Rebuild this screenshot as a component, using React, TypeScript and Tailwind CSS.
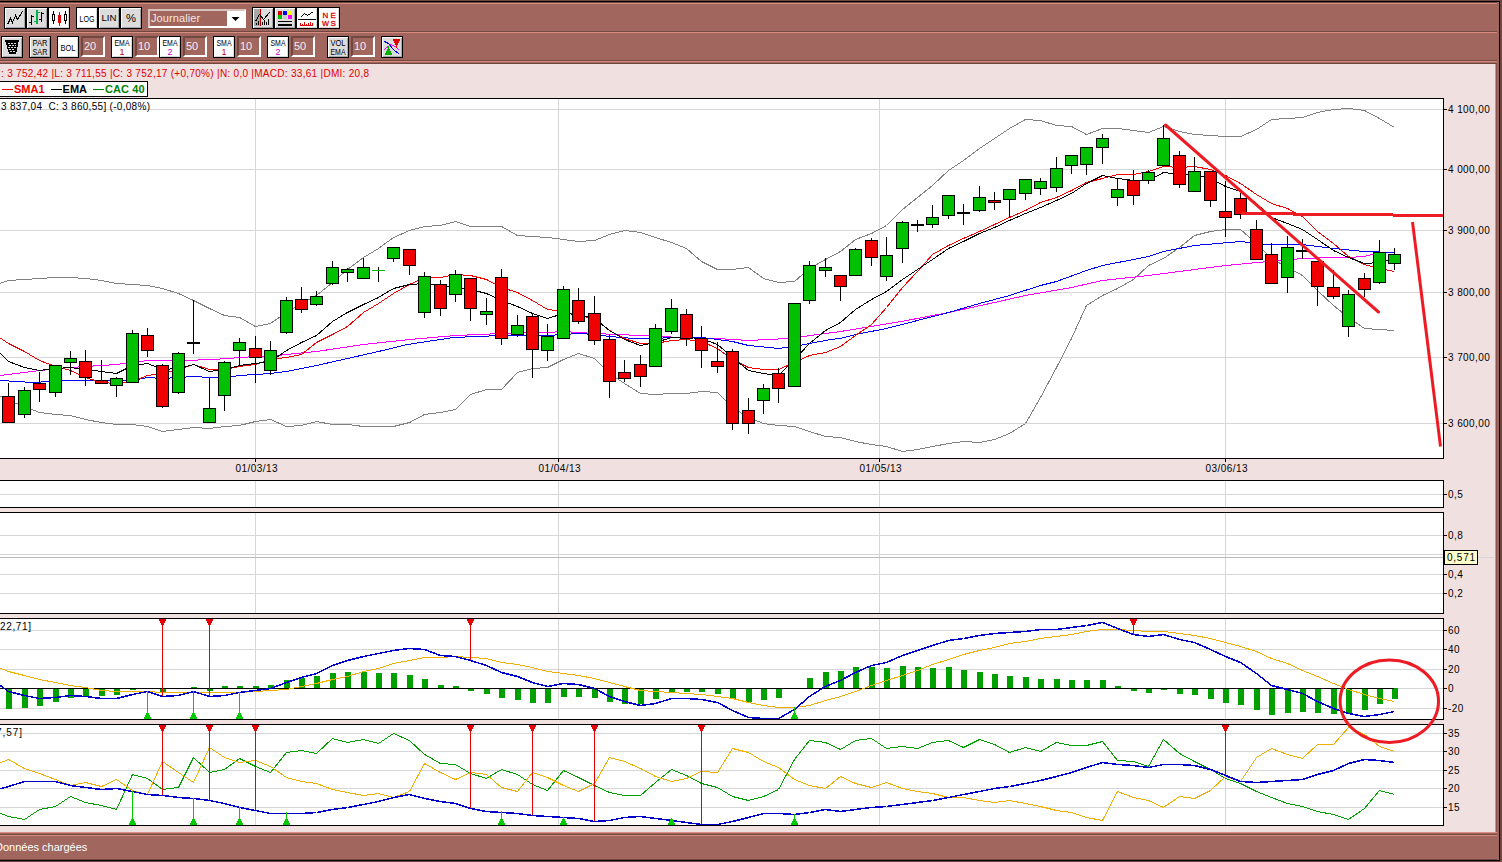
import React from "react";

const FONT = "'Liberation Sans', Arial, sans-serif";
const px = (i: number) => Math.round(8.3 + 15.4 * i);

type Candle = [string, number, number, number, number];

// [kind, high, bodyTop, bodyBottom, low]
const candles: Candle[] = [
  ["R", 383, 396, 422, 422], ["G", 387, 390, 414, 417], ["R", 372, 383, 389, 401], ["G", 365, 365, 392, 396],
  ["G", 351, 358, 362, 374], ["R", 350, 361, 377, 385], ["R", 360, 380, 383, 383], ["G", 377, 378, 385, 396],
  ["G", 330, 333, 382, 382], ["R", 328, 335, 350, 356], ["R", 364, 365, 406, 407], ["G", 352, 353, 392, 393],
  ["D", 300, 343, 343, 353], ["G", 378, 408, 422, 422], ["G", 361, 362, 395, 410], ["G", 338, 342, 350, 364],
  ["R", 336, 348, 357, 382], ["G", 341, 350, 370, 374], ["G", 297, 300, 332, 333], ["R", 287, 299, 309, 312],
  ["G", 291, 296, 304, 305], ["G", 261, 267, 283, 284], ["G", 268, 269, 272, 281], ["G", 258, 267, 278, 278],
  ["L", 267, 270, 270, 281], ["G", 247, 247, 258, 261], ["R", 249, 249, 265, 274], ["G", 272, 276, 312, 317],
  ["R", 280, 284, 308, 315], ["G", 270, 274, 294, 301], ["R", 278, 278, 308, 320], ["G", 298, 311, 314, 324],
  ["R", 269, 277, 338, 344], ["G", 315, 325, 334, 336], ["R", 314, 316, 349, 377], ["G", 324, 336, 350, 360],
  ["G", 286, 289, 338, 338], ["R", 288, 300, 321, 323], ["R", 296, 313, 340, 344], ["R", 334, 339, 381, 397],
  ["R", 360, 372, 378, 381], ["R", 355, 364, 376, 386], ["G", 324, 328, 366, 366], ["G", 299, 308, 331, 333],
  ["R", 309, 314, 338, 345], ["R", 326, 338, 350, 367], ["R", 342, 361, 366, 372], ["R", 349, 351, 423, 429],
  ["R", 398, 410, 423, 433], ["G", 384, 388, 400, 413], ["R", 368, 373, 388, 402], ["G", 303, 303, 386, 386],
  ["G", 261, 265, 300, 303], ["G", 258, 267, 270, 276], ["R", 275, 275, 286, 300], ["G", 248, 249, 275, 275],
  ["R", 238, 240, 257, 265], ["G", 237, 255, 276, 280], ["G", 221, 222, 248, 262], ["D", 220, 225, 225, 231],
  ["G", 205, 217, 224, 227], ["G", 195, 195, 215, 218], ["D", 204, 213, 213, 224], ["G", 186, 197, 210, 211],
  ["R", 192, 200, 202, 209], ["G", 189, 189, 199, 217], ["G", 179, 179, 193, 199], ["G", 178, 181, 188, 194],
  ["G", 157, 168, 187, 191], ["G", 155, 155, 165, 173], ["G", 147, 147, 164, 174], ["G", 134, 138, 147, 163],
  ["G", 179, 189, 197, 205], ["R", 170, 180, 195, 204], ["G", 170, 172, 180, 183], ["G", 125, 138, 165, 166],
  ["R", 151, 155, 184, 187], ["G", 157, 171, 191, 191], ["R", 171, 171, 200, 206], ["R", 181, 211, 217, 236],
  ["R", 193, 198, 214, 218], ["R", 220, 229, 259, 259], ["R", 243, 254, 283, 283], ["G", 236, 247, 277, 292],
  ["D", 239, 251, 251, 258], ["R", 261, 261, 286, 305], ["R", 270, 287, 296, 298], ["G", 290, 294, 326, 336],
  ["R", 273, 278, 289, 296], ["G", 240, 252, 282, 283], ["G", 248, 254, 263, 269],
];

// Every series starts one session before the first visible candle.
const upperBand = [285, 280, 279, 278, 277, 277, 278, 280, 283, 284, 285, 288, 293, 300, 308, 315, 317, 326, 323, 312, 303, 295, 282, 269, 257, 248, 237, 230, 226, 225, 221, 226, 226, 226, 235, 236, 237, 239, 241, 240, 234, 230, 232, 237, 242, 248, 261, 269, 269, 267, 278, 282, 281, 268, 259, 251, 239, 233, 225, 209, 197, 185, 170, 160, 148, 138, 128, 119, 120, 125, 126, 134, 128, 128, 130, 132, 126, 131, 134, 135, 136, 136, 129, 119, 118, 117, 112, 109, 108, 110, 118, 127];
const lowerBand = [392, 400, 406, 412, 414, 415, 419, 422, 424, 424, 426, 431, 429, 427, 428, 426, 425, 421, 419, 426, 425, 421, 424, 424, 426, 426, 426, 422, 414, 412, 409, 394, 389, 389, 372, 368, 367, 359, 353, 358, 373, 383, 393, 394, 393, 393, 391, 392, 407, 417, 423, 425, 426, 431, 436, 437, 441, 444, 446, 451, 449, 446, 443, 441, 442, 439, 433, 423, 397, 367, 338, 305, 295, 288, 279, 265, 258, 247, 235, 231, 229, 229, 243, 258, 267, 275, 290, 305, 317, 328, 329, 330];
const sma1 = [333, 343, 351, 360, 366, 370, 377, 382, 383, 381, 375, 373, 369, 364, 369, 369, 366, 364, 359, 357, 354, 342, 334, 326, 312, 303, 293, 284, 277, 277, 274, 275, 279, 287, 292, 300, 309, 311, 315, 318, 330, 338, 343, 343, 340, 339, 341, 348, 359, 367, 369, 369, 362, 355, 352, 346, 335, 324, 307, 287, 271, 254, 245, 238, 231, 224, 217, 210, 202, 197, 190, 182, 178, 174, 174, 171, 166, 167, 166, 169, 175, 183, 194, 203, 208, 216, 231, 243, 256, 264, 268, 271];
const ema1 = [346, 361, 367, 370, 368, 367, 369, 371, 373, 365, 363, 369, 368, 364, 371, 369, 365, 363, 361, 350, 342, 335, 321, 312, 304, 297, 288, 284, 283, 285, 287, 289, 293, 300, 306, 313, 318, 313, 314, 318, 330, 339, 345, 342, 337, 337, 338, 344, 357, 370, 373, 375, 359, 343, 330, 322, 309, 299, 291, 279, 269, 259, 248, 241, 233, 227, 220, 213, 207, 200, 193, 183, 175, 178, 180, 180, 172, 174, 174, 178, 186, 191, 203, 217, 223, 229, 239, 250, 257, 263, 262, 258];
const ema2: number[][] = [[0, 380], [33, 382], [63, 380], [116, 380], [132, 380], [147, 377], [162, 378], [193, 376], [209, 377], [224, 377], [239, 375], [255, 374], [270, 373], [286, 371], [316, 365], [347, 358], [378, 351], [407, 344], [453, 337], [501, 335], [530, 335], [547, 335], [563, 334], [578, 333], [594, 334], [609, 336], [633, 338], [655, 338], [671, 337], [701, 337], [717, 339], [732, 341], [748, 345], [778, 348], [794, 346], [809, 343], [830, 339], [840, 338], [855, 334], [886, 328], [917, 320], [948, 312], [979, 303], [1009, 295], [1040, 285], [1056, 281], [1086, 270], [1102, 265], [1133, 259], [1148, 256], [1163, 251], [1194, 245], [1240, 241], [1267, 244], [1302, 244], [1333, 248], [1364, 251], [1394, 252]];
const sma2: number[][] = [[0, 375], [39, 370], [70, 367], [116, 364], [147, 360], [183, 360], [213, 359], [255, 356], [270, 356], [286, 354], [316, 351], [363, 344], [409, 339], [455, 335], [501, 333], [547, 332], [563, 331], [594, 333], [640, 335], [680, 337], [717, 338], [748, 340], [788, 338], [840, 331], [901, 321], [948, 312], [994, 302], [1025, 295], [1071, 287], [1102, 280], [1148, 275], [1225, 265], [1268, 261], [1302, 258], [1333, 257], [1348, 257], [1364, 256], [1379, 252], [1394, 252]];

const macdBars = [709, 708, 706, 702, 698, 697, 696, 695, 690, 0, 692, 0, 687, 691, 686, 686, 686, 685, 680, 678, 676, 673, 672, 672, 673, 673, 675, 679, 685, 686, 691, 694, 698, 700, 703, 703, 697, 697, 698, 702, 704, 704, 699, 692, 692, 692, 694, 699, 702, 700, 698, 0, 678, 672, 671, 667, 667, 668, 666, 667, 668, 667, 670, 672, 674, 676, 677, 679, 679, 680, 680, 680, 686, 691, 693, 690, 694, 695, 699, 703, 705, 710, 715, 713, 712, 713, 714, 713, 710, 704, 699];
const macd = [680, 691, 695, 698, 697, 695, 696, 698, 698, 694, 691, 696, 695, 691, 696, 695, 692, 690, 688, 682, 677, 673, 665, 660, 656, 653, 650, 648, 649, 655, 656, 660, 665, 672, 676, 682, 686, 683, 684, 688, 696, 701, 705, 703, 698, 698, 699, 702, 710, 717, 718, 718, 709, 696, 686, 680, 672, 665, 662, 655, 650, 645, 640, 638, 635, 633, 632, 631, 629, 629, 627, 625, 622, 628, 634, 636, 634, 639, 642, 649, 656, 662, 673, 685, 689, 693, 701, 708, 713, 716, 714, 711];
const macdSignal = [665, 671, 675, 679, 682, 685, 687, 690, 691, 691, 691, 692, 692, 692, 692, 692, 692, 691, 690, 689, 686, 683, 679, 676, 671, 668, 663, 660, 657, 657, 656, 657, 658, 662, 664, 667, 671, 673, 675, 678, 682, 686, 690, 691, 692, 693, 694, 696, 698, 702, 705, 707, 707, 705, 700, 696, 691, 685, 680, 675, 670, 664, 659, 654, 650, 647, 643, 641, 638, 636, 634, 631, 629, 629, 630, 631, 631, 633, 635, 638, 642, 646, 651, 658, 663, 670, 676, 683, 689, 694, 698, 701];
const adx = [790, 786, 781, 781, 781, 785, 787, 789, 788, 791, 794, 795, 797, 798, 800, 803, 807, 810, 813, 813, 813, 812, 809, 807, 804, 801, 797, 794, 798, 801, 803, 808, 811, 812, 813, 815, 816, 817, 818, 821, 820, 817, 816, 818, 820, 822, 824, 824, 821, 817, 813, 813, 814, 812, 809, 811, 809, 807, 806, 804, 802, 800, 797, 794, 791, 788, 786, 783, 780, 776, 772, 767, 762, 764, 765, 767, 764, 764, 765, 769, 775, 781, 782, 781, 780, 779, 774, 770, 763, 759, 760, 762];
const diPlus = [810, 816, 819, 809, 806, 796, 802, 805, 809, 774, 778, 789, 787, 757, 772, 769, 758, 766, 772, 752, 750, 753, 738, 742, 739, 743, 733, 740, 754, 763, 764, 773, 778, 769, 774, 784, 790, 770, 777, 785, 792, 795, 795, 782, 769, 775, 783, 787, 796, 800, 796, 789, 759, 740, 742, 749, 740, 738, 748, 746, 748, 742, 740, 747, 739, 744, 752, 747, 751, 742, 745, 745, 741, 760, 761, 766, 739, 753, 761, 769, 778, 783, 791, 797, 803, 806, 811, 814, 819, 808, 790, 794];
const diMinus = [765, 759, 768, 773, 779, 785, 782, 786, 779, 790, 794, 761, 772, 782, 747, 757, 762, 760, 766, 777, 781, 783, 789, 792, 795, 793, 797, 791, 763, 772, 779, 772, 774, 787, 791, 772, 777, 785, 791, 783, 757, 761, 768, 776, 781, 778, 771, 772, 748, 752, 761, 767, 779, 785, 788, 776, 783, 787, 782, 788, 791, 793, 797, 797, 800, 802, 800, 803, 806, 810, 812, 817, 820, 791, 797, 800, 807, 796, 798, 790, 776, 781, 757, 748, 754, 758, 744, 744, 727, 734, 746, 751];

const line = (v: number[]) => v.map((y, k) => `${px(k - 1)},${y}`).join(" ");
const xy = (v: number[][]) => v.map((p) => p.join(",")).join(" ");

const MONTHS = [255, 558, 879, 1225];

function Line({ points, color, width = 1 }: { points: string; color: string; width?: number }) {
  return <polyline points={points} fill="none" stroke={color} strokeWidth={width} transform="translate(0.5 0.5)" />;
}

interface PanelProps {
  top: number;
  bottom: number;
  extra?: number;
  grid: [number, string][];
  children?: React.ReactNode;
  overlay?: React.ReactNode;
}

function Panel({ top, bottom, extra = 0, grid, children, overlay }: PanelProps) {
  const h = bottom - top + 1;
  return (
    <svg className="block shrink-0 overflow-hidden" width={1495} height={h + extra} viewBox={`0 ${top} 1495 ${h + extra}`} shapeRendering="crispEdges">
      <rect x={0} y={top} width={1444} height={h} fill="#fff" />
      {grid.map(([y]) => <rect key={y} x={0} y={y} width={1443} height={1} fill="#d6d6d6" />)}
      {MONTHS.map((x) => <rect key={x} x={x} y={top} width={1} height={h} fill="#d6d6d6" />)}
      {children}
      <rect x={0} y={top} width={1444} height={1} />
      <rect x={0} y={bottom} width={1444} height={1} />
      <rect x={1443} y={top} width={1} height={h} />
      {grid.filter((g) => g[1]).map(([y, label]) => (
        <g key={y}>
          <rect x={1443} y={y} width={4} height={1} />
          <text x={1448} y={y + 4} fontFamily={FONT} fontSize={10} letterSpacing={0.4}>{label}</text>
        </g>
      ))}
      {overlay}
    </svg>
  );
}

function Sell({ x, y, to }: { x: number; y: number; to: number }) {
  return (
    <g fill="#e60000">
      <rect x={x} y={y} width={1} height={to - y} />
      <path d={`M${x - 3} ${y}h7v2h-1v2h-1v2h-3v-2h-1v-2h-1z`} />
    </g>
  );
}

function Buy({ x, y, from }: { x: number; y: number; from: number }) {
  return (
    <g fill="#00cc00">
      <rect x={x} y={from} width={1} height={y - from} />
      <path d={`M${x - 3} ${y}h7v-2h-1v-2h-1v-2h-3v2h-1v2h-1z`} />
    </g>
  );
}

function PricePanel() {
  return (
    <Panel
      top={98}
      bottom={458}
      extra={21}
      grid={[[109, "4 100,00"], [169, "4 000,00"], [230, "3 900,00"], [292, "3 800,00"], [357, "3 700,00"], [423, "3 600,00"]]}
      overlay={["01/03/13", "01/04/13", "01/05/13", "03/06/13"].map((d, k) => (
        <g key={d}>
          <rect x={MONTHS[k]} y={458} width={1} height={4} />
          <text x={MONTHS[k] - 19.5} y={472} fontFamily={FONT} fontSize={10} textLength={42}>{d}</text>
        </g>
      ))}
    >
      <text x={1} y={110} fontFamily={FONT} fontSize={10} textLength={149} xmlSpace="preserve">3 837,04&nbsp; C: 3 860,55] (-0,08%)</text>
      <Line points={line(upperBand)} color="#808080" />
      <Line points={line(lowerBand)} color="#808080" />
      <Line points={xy(sma2)} color="#ff00ff" />
      <Line points={xy(ema2)} color="#0000f0" />
      <Line points={line(sma1)} color="#f00000" />
      <Line points={line(ema1)} color="#000" />
      {candles.map(([kind, hi, t, b, lo], i) => {
        const x = px(i);
        return (
          <g key={i}>
            <rect x={x} y={hi} width={1} height={lo - hi + 1} />
            {kind === "D" && <rect x={x - 6} y={t - 1} width={13} height={2} />}
            {kind === "L" && <rect x={x - 6} y={t} width={13} height={1} fill="#00c000" />}
            {(kind === "R" || kind === "G") && (
              <>
                <rect x={x - 6} y={t} width={13} height={b - t + 1} />
                <rect x={x - 5} y={t + 1} width={11} height={b - t - 1} fill={kind === "R" ? "#f00000" : "#00c000"} />
              </>
            )}
          </g>
        );
      })}
    </Panel>
  );
}

function MacdPanel() {
  return (
    <Panel top={618} bottom={719} grid={[[630, "60"], [649, "40"], [669, "20"], [688, "0"], [708, "-20"]]}>
      <text x={0} y={630} fontFamily={FONT} fontSize={10} textLength={31}>22,71]</text>
      {macdBars.map((y, i) => y > 0 && (
        <rect key={i} x={px(i) - 2} y={Math.min(y, 688)} width={6} height={Math.abs(y - 688)} fill="#00a000" />
      ))}
      <rect x={0} y={688} width={1394} height={1} />
      <Line points={line(macdSignal)} color="#f0b000" />
      <Line points={line(macd)} color="#0000c8" width={1.5} />
      <Sell x={162} y={619} to={696} />
      <Sell x={209} y={619} to={696} />
      <Sell x={470} y={619} to={660} />
      <Sell x={1133} y={619} to={634} />
      <Buy x={147} y={719} from={691} />
      <Buy x={193} y={719} from={691} />
      <Buy x={239} y={719} from={692} />
      <Buy x={794} y={719} from={707} />
    </Panel>
  );
}

function DmiPanel() {
  const sells = [[162, 795], [209, 800], [255, 810], [470, 808], [532, 815], [594, 821], [701, 824], [1225, 775]];
  const buys = [[132, 791], [193, 798], [239, 807], [286, 812], [501, 811], [563, 817], [671, 818], [794, 814]];
  return (
    <Panel top={724} bottom={825} grid={[[733, "35"], [751, "30"], [770, "25"], [788, "20"], [807, "15"]]}>
      <text x={-4} y={736} fontFamily={FONT} fontSize={10} textLength={26}>7,57]</text>
      <Line points={line(diPlus)} color="#00a000" />
      <Line points={line(diMinus)} color="#f0b000" />
      <Line points={line(adx)} color="#0000c8" width={1.5} />
      {sells.map(([x, to]) => <Sell key={x} x={x} y={725} to={to} />)}
      {buys.map(([x, from]) => <Buy key={x} x={x} y={825} from={from} />)}
    </Panel>
  );
}

function Btn({ on, children }: { on?: boolean; children: React.ReactNode }) {
  return (
    <button className={`block size-[22px] shrink-0 border border-black ${on ? "bg-white" : "bg-[#dcdcdc]"}`}>
      <svg className="block overflow-visible" width={20} height={20} viewBox="1 1 20 20" shapeRendering="crispEdges">
        <path d="M1.5 20.500V1.500H20.500" fill="none" stroke="#fff" />
        <path d="M2 20.500H20.500V2" fill="none" stroke={on ? "#d8d8d8" : "#a8a8a8"} />
        {children}
      </svg>
    </button>
  );
}

function Glyphs({ y, t, w, size = 9, color = "#000" }: { y: number; t: string; w: number; size?: number; color?: string }) {
  return (
    <text x={11 - w / 2} y={y} fontFamily={FONT} fontSize={size} textLength={w} lengthAdjust="spacingAndGlyphs" fill={color}>
      {t}
    </text>
  );
}

function Labelled({ on, a, b, color }: { on?: boolean; a: string; b: string; color?: string }) {
  return (
    <Btn on={on}>
      <Glyphs y={10} t={a} w={15} />
      <Glyphs y={19} t={b} w={b.length > 1 ? 15 : 5} color={color} />
    </Btn>
  );
}

function Field({ value }: { value: string }) {
  return (
    <div className="h-[21px] w-6 shrink-0 border-2 border-t-[#704840] border-l-[#704840] border-r-white border-b-white bg-[#a1665e] pl-px text-[11px] leading-[17px] text-[#f8ecea]">
      {value}
    </div>
  );
}

export default function App() {
  return (
    <div className="relative flex h-[862px] w-[1502px] flex-col overflow-hidden bg-[#6e473f] font-['Liberation_Sans',Arial,sans-serif] text-black">
      <div className="mt-px flex h-[860px] w-[1500px] flex-col border-t border-r border-b border-black bg-[#a1665e]">
        <div className="mr-[2px] flex h-[30px] shrink-0 items-start border-t border-b border-[#704840]">
          <div className="flex h-7 w-full items-start border-t border-[#d98c80] pt-[3px] pl-1">
            <Btn><path d="M3.500 17.500L6.500 11.500L8.500 15.500L11.500 8.500L13.500 12.500L18.500 4.500" fill="none" stroke="#000" /></Btn>
            <Btn>
              <path d="M5.500 8V18M3 15.500H5M6 9.500H8M15.500 5V15M13 12.500H15M16 6.500H18" fill="none" stroke="#000" />
              <path d="M11 3V17" fill="none" stroke="#00b050" strokeWidth={2} />
              <path d="M8 14.500H10M12 5.500H14" fill="none" stroke="#00b050" />
            </Btn>
            <Btn on>
              <path d="M5.500 4V7M5.500 13V17M17.500 4V7M17.500 13V17M4.500 7.500H6.500V13.500H4.500ZM16.500 7.500H18.500V13.500H16.500Z" fill="none" stroke="#000" />
              <path d="M11.500 5V19" stroke="#e00000" />
              <rect x={10} y={8} width={3} height={8} fill="#e00000" />
            </Btn>
            <div className="w-1.5" />
            <Btn on><Glyphs y={15} t="LOG" w={15} /></Btn>
            <Btn><Glyphs y={14} t="LIN" w={15} /></Btn>
            <Btn><Glyphs y={15} t="%" w={10} size={10} /></Btn>
            <div className="mt-[2px] ml-[6px] flex h-[19px] w-[98px] border-2 border-t-[#d8c0bc] border-l-[#d8c0bc] border-r-white border-b-white bg-white">
              <div className="w-[77px] bg-[#a1665e] pl-px text-[11px] leading-[15px] tracking-[0.1px] text-[#f4e6e3]">Journalier</div>
              <svg className="block" width={17} height={15} viewBox="0 0 17 15"><path d="M4.500 6H12.500L8.500 10Z" /></svg>
            </div>
            <div className="w-1.5" />
            <Btn>
              <rect x={2} y={2} width={6} height={17} fill="#a8a8a8" />
              <path d="M8.500 2V19" stroke="#c00000" />
              <path d="M3.500 14.500L7.500 7.500L11.500 12.500L17.500 5.500" fill="none" stroke="#000" />
              <path d="M4.500 16V18M6.500 14V18M10.500 15V18M12.500 13V18M14.500 15V18M16.500 12V18" stroke="#000" />
            </Btn>
            <Btn>
              <rect x={4} y={4} width={4} height={4} fill="#e00000" />
              <rect x={9} y={4} width={4} height={4} fill="#0000f0" />
              <rect x={14} y={4} width={4} height={4} fill="#ffff00" />
              <rect x={4} y={8} width={4} height={4} fill="#00c000" />
              <rect x={9} y={8} width={4} height={4} fill="#c8c8c8" />
              <rect x={14} y={8} width={4} height={4} fill="#ff00ff" />
              <rect x={4} y={14} width={14} height={1} />
              <rect x={4} y={17} width={14} height={2} />
            </Btn>
            <Btn on>
              <path d="M4.500 10.500L8.500 6.500L11.500 8.500L17.500 4.500" fill="none" stroke="#000" />
              <path d="M2 12.500H20" stroke="#000" />
              <path d="M4.500 16V19M6.500 17V19M8.500 15V19M10.500 17V19M12.500 16V19M14.500 15V19M16.500 16V19M4 18.500H17" stroke="#e00000" />
            </Btn>
            <Btn on>
              <g fill="#e00000" stroke="#e00000" strokeWidth={0.3} fontFamily={FONT} fontSize={8}>
                <text x={4.500} y={11}>N</text>
                <text x={12.500} y={11}>E</text>
                <text x={4} y={19} textLength={7} lengthAdjust="spacingAndGlyphs">W</text>
                <text x={12.500} y={19}>S</text>
              </g>
            </Btn>
          </div>
        </div>
        <div className="mr-[2px] flex h-[29px] shrink-0 items-start border-t border-b border-t-[#d98c80] border-b-[#704840] pt-[3px] pl-px">
          <Btn>
            <path d="M4 4H18L15 18H8Z" />
            <path d="M7 7.500H15M7 11.500H15M9 15.500H14" stroke="#dcdcdc" strokeDasharray="2 1" />
            <path d="M8 9.500H15M8 13.500H14" stroke="#dcdcdc" strokeDasharray="2 1" />
          </Btn>
          <div className="w-1.5" />
          <Labelled a="PAR" b="SAR" />
          <div className="w-1.5" />
          <Btn on><Glyphs y={15} t="BOL" w={15} /></Btn>
          <div className="w-[2px]" /><Field value="20" />
          <div className="w-1.5" />
          <Labelled on a="EMA" b="1" color="#c00000" />
          <div className="w-[2px]" /><Field value="10" />
          <Labelled on a="EMA" b="2" color="#c000c0" />
          <div className="w-[2px]" /><Field value="50" />
          <div className="w-1.5" />
          <Labelled on a="SMA" b="1" color="#c00000" />
          <div className="w-[2px]" /><Field value="10" />
          <div className="w-1.5" />
          <Labelled on a="SMA" b="2" color="#c000c0" />
          <div className="w-[2px]" /><Field value="50" />
          <div className="w-3" />
          <Labelled a="VOL" b="EMA" />
          <div className="w-[2px]" /><Field value="10" />
          <div className="w-1.5" />
          <Btn>
            <path d="M3.500 5.500L7.500 7.500L12.500 13.500L18.500 18.500" fill="none" stroke="#0000f0" />
            <path d="M3.500 13.500L9.500 8.500L14.500 10.500L18.500 14.500" fill="none" stroke="#ff00ff" />
            <path d="M12 3H19V5H18V7H17V9H14V7H13V5H12Z" fill="#e00000" />
            <path d="M4 19H11V17H10V15H9V13H6V15H5V17H4Z" fill="#00b000" />
            <path d="M15.500 8V12" stroke="#e00000" />
            <path d="M7.500 10V13" stroke="#00b000" />
          </Btn>
        </div>
        <div className="mr-[2px] h-px shrink-0 bg-[#d98c80]" />
        <div className="h-px shrink-0" />
        <div className="mr-[2px] flex h-[769px] shrink-0 flex-col border-t border-r border-t-[#704840] border-r-[#8a544c]">
          <div className="flex w-[1496px] flex-col border-r border-[#d98c80] bg-[#f0e0e0]">
            <div className="flex h-[34px] flex-col items-start">
              <div className="mt-[3px] h-[14px] pl-px text-[10px] leading-[14px] tracking-[0.29px] whitespace-pre text-[#e00000]">: 3 752,42 |L: 3 711,55 |C: 3 752,17 (+0,70%) |N: 0,0 |MACD: 33,61 |DMI: 20,8</div>
              <div className="flex h-4 w-[148px] items-center gap-px border border-l-0 border-black bg-white pl-[2px] text-[11px] leading-[14px] font-bold">
                <span className="h-px w-[11px] bg-[#f00000]" /><span className="text-[#f00000]">SMA1</span>
                <span className="ml-[5px] h-px w-[11px] bg-black" /><span>EMA</span>
                <span className="ml-[5px] h-px w-[11px] bg-[#008000]" /><span className="whitespace-nowrap tracking-[0.1px] text-[#008000]">CAC 40</span>
              </div>
            </div>
            <PricePanel />
            <div className="flex flex-col gap-1 pb-1.5">
              <Panel top={480} bottom={507} grid={[[494, "0,5"]]} />
              <Panel
                top={512}
                bottom={613}
                grid={[[535, "0,8"], [554, ""], [574, "0,4"], [593, "0,2"]]}
                overlay={
                  <g>
                    <rect x={1444} y={557} width={50} height={1} fill="#d6d6d6" />
                    <rect x={1444} y={550} width={34} height={15} />
                    <rect x={1445} y={551} width={32} height={13} fill="#ffffcc" />
                    <text x={1447} y={561} fontFamily={FONT} fontSize={10} textLength={28}>0,571</text>
                  </g>
                }
              >
                <rect x={0} y={557} width={1443} height={1} fill="#b8b8b8" />
              </Panel>
              <MacdPanel />
              <DmiPanel />
            </div>
          </div>
        </div>
        <div className="mr-[2px] flex h-[28px] shrink-0 flex-col border-t border-t-[#d98c80] border-b border-b-[#704840]">
          <div className="mt-px h-px bg-[#704840]" />
          <div className="h-px bg-[#d98c80]" />
          <div className="-ml-[5px] pt-[4px] text-[11px] leading-[14px] text-white">Données chargées</div>
        </div>
      </div>
      <svg className="pointer-events-none absolute top-0 left-0" width={1502} height={862} fill="none" stroke="#ed1c24" strokeWidth={3}>
        <path d="M1165.500 125L1378.500 312" strokeLinecap="round" />
        <path d="M1241 213.500H1294M1293 214.500H1393M1393 215.500H1443" shapeRendering="crispEdges" />
        <path d="M1412.500 222L1440.500 446.500" />
        <ellipse cx={1389.300} cy={701.200} rx={49.200} ry={41.300} />
      </svg>
    </div>
  );
}
